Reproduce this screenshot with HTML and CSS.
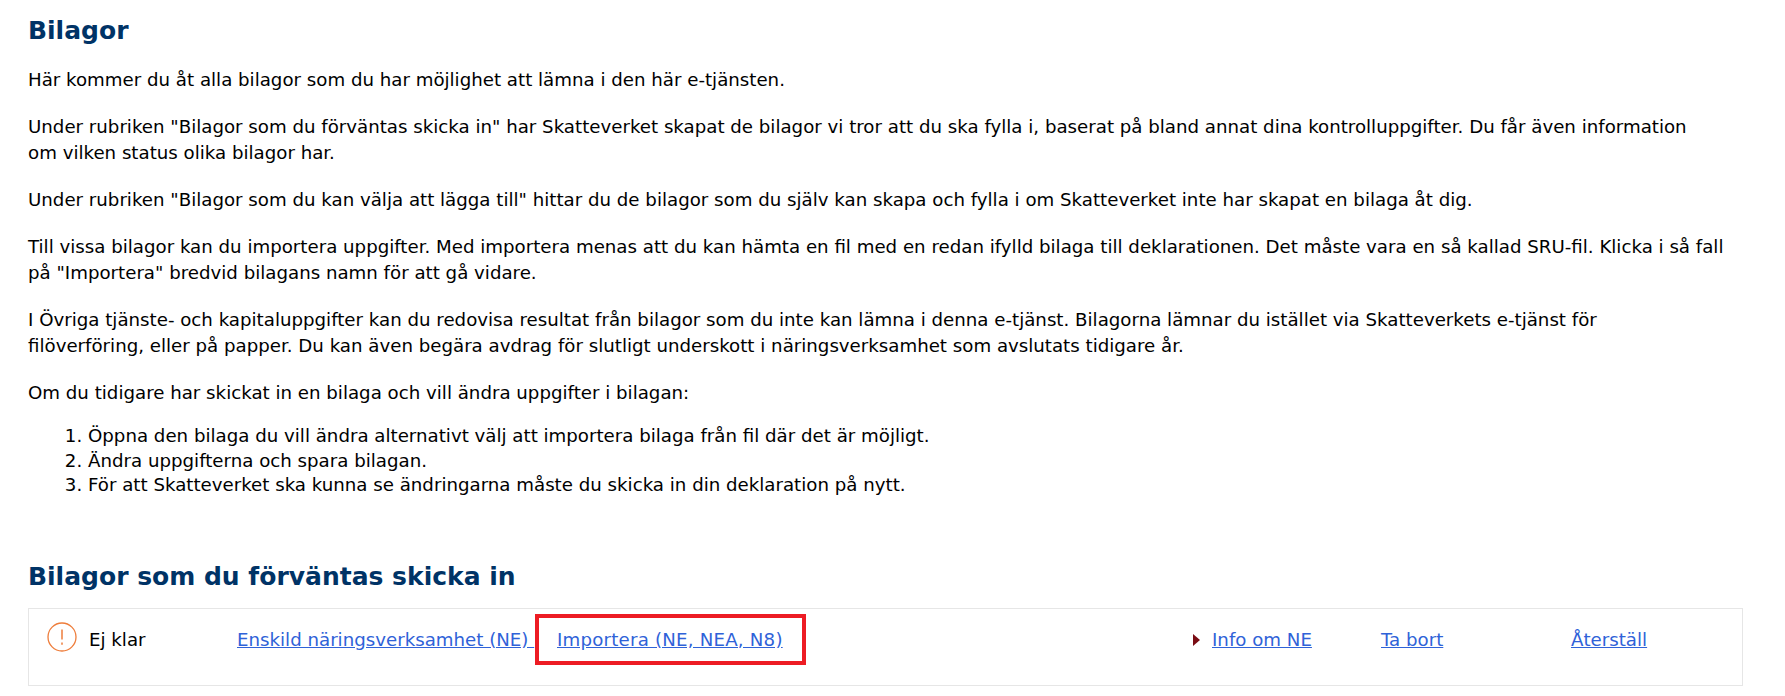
FILE: index.html
```html
<!DOCTYPE html>
<html lang="sv">
<head>
<meta charset="UTF-8" />
<title>Bilagor</title>
<link rel="stylesheet" href="styles.css">
</head>
<body>
  <main class="page">
    <h1>Bilagor</h1>
    <p>Här kommer du åt alla bilagor som du har möjlighet att lämna i den här e-tjänsten.</p>
    <p>Under rubriken "Bilagor som du förväntas skicka in" har Skatteverket skapat de bilagor vi tror att du ska fylla i, baserat på bland annat dina kontrolluppgifter. Du får även information<br>om vilken status olika bilagor har.</p>
    <p>Under rubriken "Bilagor som du kan välja att lägga till" hittar du de bilagor som du själv kan skapa och fylla i om Skatteverket inte har skapat en bilaga åt dig.</p>
    <p>Till vissa bilagor kan du importera uppgifter. Med importera menas att du kan hämta en fil med en redan ifylld bilaga till deklarationen. Det måste vara en så kallad SRU-fil. Klicka i så fall på "Importera" bredvid bilagans namn för att gå vidare.</p>
    <p>I Övriga tjänste- och kapitaluppgifter kan du redovisa resultat från bilagor som du inte kan lämna i denna e-tjänst. Bilagorna lämnar du istället via Skatteverkets e-tjänst för<br>filöverföring, eller på papper. Du kan även begära avdrag för slutligt underskott i näringsverksamhet som avslutats tidigare år.</p>
    <p class="list-intro">Om du tidigare har skickat in en bilaga och vill ändra uppgifter i bilagan:</p>
    <ol>
      <li>Öppna den bilaga du vill ändra alternativt välj att importera bilaga från fil där det är möjligt.</li>
      <li>Ändra uppgifterna och spara bilagan.</li>
      <li>För att Skatteverket ska kunna se ändringarna måste du skicka in din deklaration på nytt.</li>
    </ol>
    <h2>Bilagor som du förväntas skicka in</h2>
    <div class="attachment-row">
      <div class="status">
        <svg class="status-icon" viewBox="0 0 30 30" aria-hidden="true">
          <circle cx="15" cy="15" r="14" fill="none" stroke="#ee7d3b" stroke-width="1.3"/>
          <path d="M15 7.5v10" stroke="#ee7d3b" stroke-width="1.5" fill="none"/>
          <path d="M15 20.5v2.2" stroke="#ee7d3b" stroke-width="1.5" fill="none"/>
        </svg>
        <span>Ej klar</span>
      </div>
      <a class="name-link" href="#">Enskild näringsverksamhet (NE)&nbsp;</a>
      <a class="import-link" href="#">Importera (NE, NEA, N8)</a>
      <span class="highlight"></span>
      <div class="info">
        <svg class="marker" viewBox="0 0 7 12" aria-hidden="true"><path d="M0 0l7 6-7 6z" fill="#7a0c14"/></svg>
        <a href="#">Info om NE</a>
      </div>
      <a class="remove-link" href="#">Ta bort</a>
      <a class="reset-link" href="#">Återställ</a>
    </div>
  </main>
</body>
</html>
```

FILE: styles.css
```css
body {
  margin: 0;
  background: #fff;
  color: #000;
  font-family: "DejaVu Sans", Verdana, sans-serif;
  font-size: 18.2px;
  line-height: 26px;
}
.page {
  width: 1715px;
  padding: 16px 0 0 28px;
}
h1, h2 {
  margin: 0;
  color: #003366;
  font-weight: 700;
  font-size: 25px;
  line-height: 30px;
}
h1 {
  margin-bottom: 21px;
}
p {
  margin: 0 0 21px;
}
.list-intro {
  margin-bottom: 18px;
}
ol {
  margin: 0;
  padding-left: 60px;
  line-height: 24.5px;
}
h2 {
  margin-top: 64px;
}
a {
  color: #2f62d8;
}
.attachment-row {
  position: relative;
  display: flex;
  align-items: center;
  box-sizing: border-box;
  height: 78px;
  margin-top: 16px;
  padding: 18px 0 32px 18px;
  border: 1px solid #e6e6e6;
}
.status {
  display: flex;
  align-items: center;
  gap: 12px;
  width: 190px;
}
.status-icon {
  width: 30px;
  height: 30px;
  margin-top: -6px;
}
.name-link {
  width: 320px;
}
.import-link {
  width: 636px;
  letter-spacing: 0.2px;
}
.info {
  display: flex;
  align-items: center;
  gap: 12px;
  width: 188px;
}
.marker {
  width: 7px;
  height: 12px;
}
.remove-link {
  width: 190px;
}
.highlight {
  position: absolute;
  left: 506px;
  top: 5px;
  width: 263px;
  height: 43px;
  border: 4px solid #ed1c24;
}
```
